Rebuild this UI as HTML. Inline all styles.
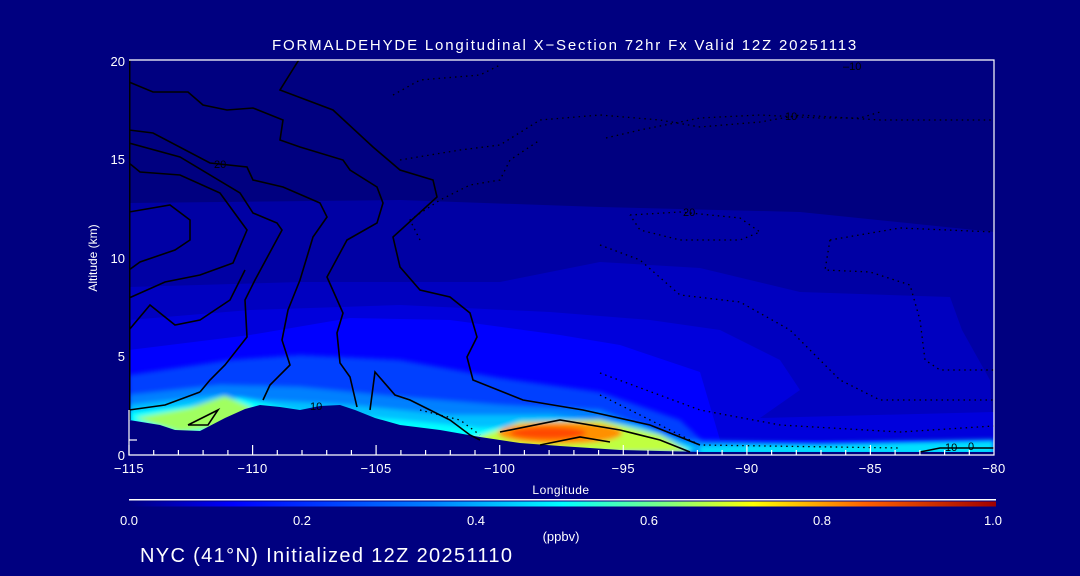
<!DOCTYPE html>
<html><head><meta charset="utf-8"><style>
html,body{margin:0;padding:0;background:#000080;}
svg{display:block;}
text{font-family:"Liberation Sans",sans-serif;fill:#fff;}
</style></head><body>
<svg width="1080" height="576" viewBox="0 0 1080 576" xmlns="http://www.w3.org/2000/svg">
<defs>
<linearGradient id="cb" x1="0" x2="1" y1="0" y2="0">
<stop offset="0" stop-color="#000080"/>
<stop offset="0.12" stop-color="#0000ff"/>
<stop offset="0.35" stop-color="#0080ff"/>
<stop offset="0.5" stop-color="#00ffff"/>
<stop offset="0.62" stop-color="#80ff80"/>
<stop offset="0.72" stop-color="#ffff00"/>
<stop offset="0.85" stop-color="#ff6000"/>
<stop offset="1" stop-color="#a00000"/>
</linearGradient>
<filter id="bl"><feGaussianBlur stdDeviation="2.5"/></filter>
<clipPath id="pc"><rect x="129" y="60" width="865" height="395"/></clipPath>
</defs>
<rect width="1080" height="576" fill="#000080"/>
<g clip-path="url(#pc)">
<path fill="#0000a4" d="M129,203 L400,200 L600,207 L800,212 L994,232 L994,455 L129,455Z"/>
<path fill="#0000c0" d="M129,287 L300,282 L500,282 L600,262 L700,268 L800,292 L950,297 L962,330 L990,380 L994,455 L129,455Z"/>
<path fill="#0000dc" d="M129,320 L250,310 L400,305 L550,312 L650,320 L720,330 L780,360 L800,390 L760,418 L994,412 L994,455 L129,455Z"/>
<path fill="#0000ff" d="M129,350 L250,335 L350,318 L450,320 L560,335 L620,345 L700,372 L720,440 L994,440 L994,455 L129,455Z"/>
<g filter="url(#bl)">
<path fill="#0040ff" d="M129,375 L230,360 L300,355 L400,360 L500,378 L600,392 L680,420 L710,448 L994,446 L994,455 L129,455Z"/>
<path fill="#0080ff" d="M129,395 L220,385 L300,387 L400,397 L500,405 L600,410 L680,440 L994,448 L994,455 L129,455Z"/>
<path fill="#00c0ff" d="M129,405 L220,395 L260,400 L350,405 L450,415 L550,415 L640,425 L700,448 L129,455Z"/>
<path fill="#00ffff" d="M129,412 L200,405 L240,398 L300,412 L400,420 L480,428 L560,425 L650,440 L700,450 L129,455Z"/>
<path fill="#00e0ff" d="M700,446 L994,440 L994,455 L700,455Z"/>
<path fill="#a0ff60" d="M135,418 L190,408 L225,396 L252,408 L232,426 L180,432Z"/>
<path fill="#c0ff40" d="M470,440 L520,422 L600,420 L660,435 L690,452 L470,452Z"/>
<ellipse cx="560" cy="433" rx="62" ry="11" fill="#ff9000"/>
<ellipse cx="548" cy="433" rx="38" ry="6" fill="#ff4800"/>
</g>
<path fill="#000080" d="M129,420 L160,425 L175,430 L200,431 L225,418 L245,409 L260,405 L280,407 L300,410 L320,406 L340,405 L355,410 L375,418 L400,425 L440,430 L480,437 L520,443 L560,446 L620,450 L700,452 L994,452 L994,460 L129,460Z"/>
<g fill="none" stroke="#000" stroke-width="1.6">
<polyline points="300,58 280,90 333,110 373,147 400,170 433,180 437,197 393,237 400,267 420,290 450,297 470,313 477,337 467,357 473,380 523,400 583,410 650,425 700,445"/>
<polyline points="129,82 153,92 188,92 203,105 227,110 253,108 283,120 280,140 300,147 343,160 350,170 377,187 383,203 377,223 347,240 327,277 343,313 337,333 340,363 350,377 357,407"/>
<polyline points="129,130 153,133 210,163 247,167 253,180 283,187 320,203 327,217 313,237 300,280 288,310 282,340 290,365 270,385 263,400"/>
<polyline points="129,143 180,157 240,193 253,213 277,223 282,230 255,280 245,300 247,337 225,365 210,380 200,392"/>
<polyline points="129,163 140,172 180,175 220,193 247,230 233,263 200,275 165,282 129,298"/>
<polyline points="129,212 170,205 190,220 190,240 175,250 140,262 129,270"/>
<polyline points="129,330 150,305 175,325 200,320 230,300 245,270"/>
<polyline points="129,410 165,405 200,392"/>
<polyline points="370,410 375,372 395,395 410,400 430,410 450,420 470,435 480,440"/>
<polyline points="188,425 218,410 208,425 188,425"/>
<polyline points="500,432 560,420 620,430 660,440 690,452"/>
<polyline points="540,445 580,437 610,442"/>
<polyline points="920,452 940,448 994,448"/>
<line x1="129" y1="60" x2="129" y2="420" stroke-width="3"/>
</g>
<g fill="none" stroke="#000" stroke-width="1.3" stroke-dasharray="1.5 4">
<polyline points="393,95 420,80 480,75 500,65"/>
<polyline points="400,160 460,150 500,145 540,120 600,115 660,120 700,127 760,122 800,115 880,120 994,120"/>
<polyline points="606,138 640,130 700,118 760,115 820,118 860,118 880,112"/>
<polyline points="420,240 410,220 440,200 470,185 500,180 510,160 540,140"/>
<polyline points="630,215 680,212 740,218 760,232 740,240 680,240 640,230 630,215"/>
<polyline points="830,240 900,228 994,232"/>
<polyline points="600,245 640,260 680,295 740,302 790,330 840,380 880,400 994,400"/>
<polyline points="830,240 825,270 870,272 910,285 920,320 925,360 940,370 994,370"/>
<polyline points="600,373 700,410 780,425 900,432 994,426"/>
<polyline points="600,395 700,445 900,448"/>
<polyline points="420,410 460,420 480,435"/>
</g>
<g font-size="11">
<text x="214" y="168" style="fill:#000">20</text>
<text x="785" y="120" style="fill:#000">10</text>
<text x="843" y="70" style="fill:#000">–10</text>
<text x="683" y="216" style="fill:#000">20</text>
<text x="945" y="451" style="fill:#000">10</text>
<text x="968" y="450" style="fill:#000">0</text>
<text x="310" y="410" style="fill:#000">10</text>
</g>
</g>
<g stroke="#fff" stroke-width="1.2" fill="none">
<polyline points="129,60 994,60 994,455 129,455 129,410"/>
</g>
<g stroke="#fff" stroke-width="1.2">
<line x1="129" y1="455" x2="129" y2="445"/><line x1="252.6" y1="455" x2="252.6" y2="445"/><line x1="376.1" y1="455" x2="376.1" y2="445"/><line x1="499.7" y1="455" x2="499.7" y2="445"/><line x1="623.3" y1="455" x2="623.3" y2="445"/><line x1="746.9" y1="455" x2="746.9" y2="445"/><line x1="870.4" y1="455" x2="870.4" y2="445"/>
<line x1="153.7" y1="455" x2="153.7" y2="450"/><line x1="178.4" y1="455" x2="178.4" y2="450"/><line x1="203.1" y1="455" x2="203.1" y2="450"/><line x1="227.9" y1="455" x2="227.9" y2="450"/>
<line x1="277.3" y1="455" x2="277.3" y2="450"/><line x1="302" y1="455" x2="302" y2="450"/><line x1="326.7" y1="455" x2="326.7" y2="450"/><line x1="351.4" y1="455" x2="351.4" y2="450"/>
<line x1="400.9" y1="455" x2="400.9" y2="450"/><line x1="425.6" y1="455" x2="425.6" y2="450"/><line x1="450.3" y1="455" x2="450.3" y2="450"/><line x1="475" y1="455" x2="475" y2="450"/>
<line x1="524.4" y1="455" x2="524.4" y2="450"/><line x1="549.1" y1="455" x2="549.1" y2="450"/><line x1="573.9" y1="455" x2="573.9" y2="450"/><line x1="598.6" y1="455" x2="598.6" y2="450"/>
<line x1="648" y1="455" x2="648" y2="450"/><line x1="672.7" y1="455" x2="672.7" y2="450"/><line x1="697.4" y1="455" x2="697.4" y2="450"/><line x1="722.1" y1="455" x2="722.1" y2="450"/>
<line x1="771.6" y1="455" x2="771.6" y2="450"/><line x1="796.3" y1="455" x2="796.3" y2="450"/><line x1="821" y1="455" x2="821" y2="450"/><line x1="845.7" y1="455" x2="845.7" y2="450"/>
<line x1="895.1" y1="455" x2="895.1" y2="450"/><line x1="919.9" y1="455" x2="919.9" y2="450"/><line x1="944.6" y1="455" x2="944.6" y2="450"/><line x1="969.3" y1="455" x2="969.3" y2="450"/>
<line x1="129" y1="440" x2="137" y2="440"/>
</g>
<g font-size="13" text-anchor="middle" letter-spacing="0.5">
<text x="129" y="473">−115</text><text x="252.6" y="473">−110</text><text x="376.1" y="473">−105</text><text x="499.7" y="473">−100</text><text x="623.3" y="473">−95</text><text x="746.9" y="473">−90</text><text x="870.4" y="473">−85</text><text x="994" y="473">−80</text>
</g>
<g font-size="13" text-anchor="end">
<text x="125" y="460">0</text><text x="125" y="361">5</text><text x="125" y="263">10</text><text x="125" y="164">15</text><text x="125" y="66">20</text>
</g>
<text x="272" y="50" font-size="15" letter-spacing="1.75" textLength="586" lengthAdjust="spacing">FORMALDEHYDE Longitudinal X−Section 72hr  Fx Valid 12Z 20251113</text>
<text transform="translate(97,258) rotate(-90)" font-size="12" text-anchor="middle">Altitude (km)</text>
<text x="561" y="494" font-size="12" text-anchor="middle" letter-spacing="0.5">Longitude</text>
<rect x="129" y="499" width="867" height="1.5" fill="#fff"/>
<rect x="129" y="501.5" width="867" height="5" fill="url(#cb)"/>
<g font-size="13" text-anchor="middle">
<text x="129" y="525">0.0</text><text x="302" y="525">0.2</text><text x="476" y="525">0.4</text><text x="649" y="525">0.6</text><text x="822" y="525">0.8</text><text x="993" y="525">1.0</text>
</g>
<text x="561" y="541" font-size="13" text-anchor="middle">(ppbv)</text>
<text x="140" y="562" font-size="20" textLength="372" lengthAdjust="spacing">NYC (41°N) Initialized 12Z 20251110</text>
</svg>
</body></html>
